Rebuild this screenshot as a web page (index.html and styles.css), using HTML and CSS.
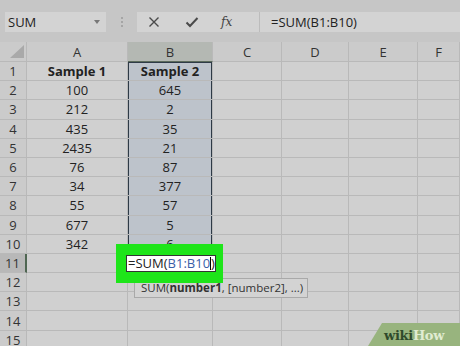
FILE: index.html
```html
<!DOCTYPE html>
<html lang="en">
<head>
    <meta charset="UTF-8">
    <title>SUM formula</title>
    <link rel="stylesheet" href="styles.css">
</head>
<body>
    <div class="toolbar">
        <div class="name-box">
            <span>SUM</span>
            <span class="caret"></span>
        </div>
        <div class="grip">
            <i></i><i></i><i></i>
        </div>
        <div class="formula-bar">
            <div class="fx-buttons">
                <svg class="icon" width="12" height="12" viewBox="0 0 12 12"><path d="M1.5 1.5 L10.5 10.5 M10.5 1.5 L1.5 10.5" stroke="#4a4a4a" stroke-width="1.4" fill="none"/></svg>
                <svg class="icon" width="14" height="12" viewBox="0 0 14 12"><path d="M1.5 6.5 L5 10 L12.5 2" stroke="#4a4a4a" stroke-width="2" fill="none"/></svg>
                <span class="fx">fx</span>
            </div>
            <div class="formula-text">=SUM(B1:B10)</div>
        </div>
    </div>

    <div class="sheet">
        <div class="corner"><span class="tri"></span></div>
        <div class="colhead">A</div>
        <div class="colhead active">B</div>
        <div class="colhead">C</div>
        <div class="colhead">D</div>
        <div class="colhead">E</div>
        <div class="colhead">F</div>
        <!-- rows get filled by script -->
    </div>

    <div class="editor">
        <div class="edit-cell">=SUM(<span class="ref">B1:B10</span><span class="caret-bar"></span>)</div>
    </div>
    <div class="hint">SUM(<b>number1</b>, [number2], ...)</div>

    <div class="logo"><span class="wiki">wiki</span><span class="how">How</span></div>

    <script>
        const sheet = document.querySelector('.sheet');
        const rows = [
            ['Sample 1', 'Sample 2'],
            ['100', '645'],
            ['212', '2'],
            ['435', '35'],
            ['2435', '21'],
            ['76', '87'],
            ['34', '377'],
            ['55', '57'],
            ['677', '5'],
            ['342', '6']
        ];

        for (let r = 1; r <= 15; r++) {
            const data = rows[r - 1] || ['', ''];
            const head = document.createElement('div');
            head.className = 'rowhead' + (r === 11 ? ' active' : '');
            head.textContent = r;
            sheet.appendChild(head);
            for (let c = 0; c < 6; c++) {
                const cell = document.createElement('div');
                cell.className = 'cell';
                if (c === 1 && r <= 10) cell.classList.add('picked');
                if (c === 1 && r === 1) cell.classList.add('first');
                if (c === 1 && r === 10) cell.classList.add('last');
                if (r === 1) cell.classList.add('bold');
                if (c < 2) cell.textContent = data[c];
                sheet.appendChild(cell);
            }
        }
    </script>
</body>
</html>
```

FILE: styles.css
```css
body {
    margin: 0;
    width: 460px;
    height: 346px;
    overflow: hidden;
    position: relative;
    background: #c8c8c8;
    font-family: "Open Sans", "Noto Sans", sans-serif;
    color: #222;
}
.toolbar {
    height: 42px;
    display: flex;
    align-items: flex-start;
    padding-top: 12px;
    box-sizing: border-box;
    background: #c6c6c6;
}
.name-box {
    margin-left: 5px;
    width: 101px;
    height: 20px;
    background: #d3d3d3;
    display: flex;
    align-items: center;
    justify-content: space-between;
    padding: 0 6px 0 3px;
    box-sizing: border-box;
    font-size: 13px;
}
.caret {
    border-left: 3px solid transparent;
    border-right: 3px solid transparent;
    border-top: 4px solid #777;
}
.grip {
    width: 31px;
    height: 20px;
    display: flex;
    flex-direction: column;
    align-items: center;
    justify-content: center;
    gap: 2px;
}
.grip i {
    width: 2px;
    height: 2px;
    background: #a5a5a5;
}
.formula-bar {
    flex: 1;
    height: 20px;
    display: flex;
    background: #d3d3d3;
}
.fx-buttons {
    width: 111px;
    display: flex;
    align-items: center;
    border-right: 1px solid #bcbcbc;
    padding-left: 11px;
    gap: 25px;
}
.fx {
    font-family: "DejaVu Serif", serif;
    font-style: italic;
    font-size: 12px;
    color: #444;
    margin-left: -3px;
}
.formula-text {
    padding-left: 11px;
    font-size: 13px;
    line-height: 20px;
}
.sheet {
    display: grid;
    grid-template-columns: 27px 101px 85px 69px 67px 69px 42px;
    grid-template-rows: 20px repeat(15, 19.2px);
    height: 304px;
    overflow: hidden;
    background: #d0d0d0;
    font-size: 13px;
}
.sheet > div {
    border-right: 1px solid #b9b9b9;
    border-bottom: 1px solid #b9b9b9;
    box-sizing: border-box;
    display: flex;
    align-items: center;
    justify-content: center;
}
.corner {
    background: #cbcbcb;
    position: relative;
}
.tri {
    position: absolute;
    right: 2px;
    bottom: 3px;
    border-left: 14px solid transparent;
    border-bottom: 13px solid #a9a9a9;
}
.colhead {
    background: #cbcbcb;
    font-size: 13px;
    color: #333;
}
.sheet > .colhead.active {
    background: #b4b8b3;
    border-bottom: 1px solid #5c6b5c;
}
.rowhead {
    background: #cbcbcb;
    color: #333;
    font-size: 13px;
}
.sheet > .rowhead.active {
    background: #b8b8b8;
    border-right: 2px solid #4f6652;
}
.cell.picked {
    background: #bdc3cb;
    box-shadow: inset 1px 0 #2e3a46, inset -1px 0 #2e3a46;
}
.cell.picked.first {
    box-shadow: inset 1px 0 #2e3a46, inset -1px 0 #2e3a46, inset 0 1px #2e3a46;
}
.sheet > .cell.picked.last {
    border-bottom: 1px solid #2e3a46;
}
.cell.bold {
    font-weight: bold;
}
.editor {
    position: absolute;
    left: 116px;
    top: 244px;
    width: 107px;
    height: 39px;
    background: #1ee51a;
    z-index: 2;
    display: flex;
    align-items: center;
    padding-left: 10px;
    box-sizing: border-box;
}
.edit-cell {
    background: #fff;
    width: 90px;
    height: 17px;
    border: 1px solid #333;
    box-sizing: border-box;
    font-size: 13px;
    line-height: 15px;
    padding-left: 1px;
    white-space: nowrap;
    color: #222;
}
.ref {
    color: #3a5ea8;
}
.caret-bar {
    display: inline-block;
    width: 1px;
    height: 13px;
    background: #000;
    vertical-align: -2px;
}
.hint {
    position: absolute;
    left: 134px;
    top: 278px;
    width: 174px;
    height: 20px;
    background: #d3d3d3;
    border: 1px solid #a9a9a9;
    box-sizing: border-box;
    font-size: 11.5px;
    line-height: 18px;
    padding-left: 6px;
    white-space: nowrap;
    overflow: hidden;
    color: #333;
    z-index: 1;
}
.logo {
    position: absolute;
    right: 0;
    bottom: 0;
    width: 92px;
    height: 23px;
    background: #98b47e;
    clip-path: polygon(14px 0, 100% 0, 100% 100%, 0 100%);
    font-family: "DejaVu Serif", serif;
    font-weight: bold;
    font-size: 13px;
    line-height: 25px;
    padding-left: 16px;
    box-sizing: border-box;
    letter-spacing: -0.3px;
}
.wiki {
    color: #2f4a2b;
}
.how {
    color: #e0ecd2;
}
```
